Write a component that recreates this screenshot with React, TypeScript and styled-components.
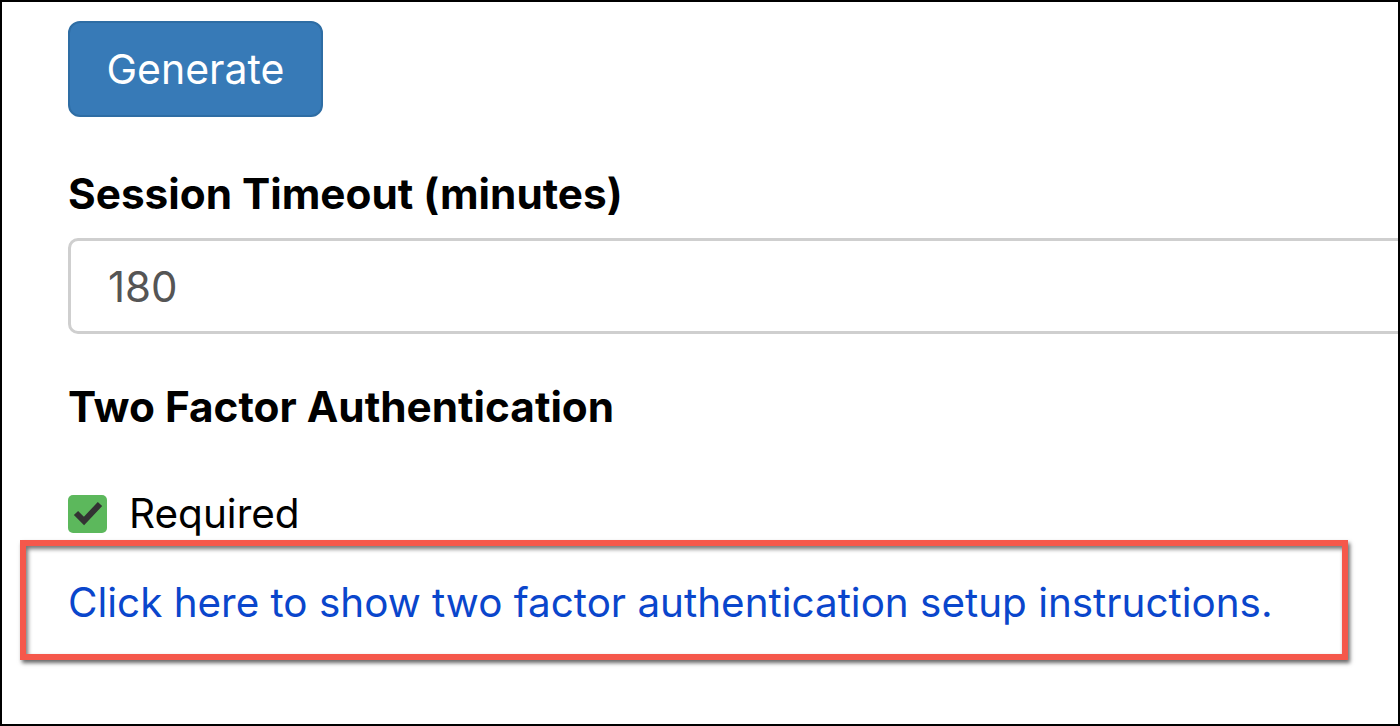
import React from 'react';
import styled, { createGlobalStyle } from 'styled-components';

const GlobalStyle = createGlobalStyle`
  html, body {
    margin: 0;
    padding: 0;
    background: #fff;
  }
  body {
    font-family: Inter, "Liberation Sans", sans-serif;
    color: #000;
  }
`;

const Frame = styled.div`
  box-sizing: border-box;
  width: 1400px;
  height: 726px;
  border: 2px solid #000;
  overflow: hidden;
  padding: 19px 0 0 66px;
  display: flex;
  flex-direction: column;
  align-items: flex-start;
`;

const Button = styled.button`
  box-sizing: border-box;
  width: 255px;
  height: 96px;
  display: flex;
  align-items: center;
  justify-content: center;
  background: #377ab7;
  border: 2px solid #2e6da4;
  border-radius: 12px;
  color: #fff;
  font-family: Inter, "Liberation Sans", sans-serif;
  font-size: 41px;
  padding: 0;
`;

const Label = styled.label<{ $top: number }>`
  display: block;
  margin-top: ${(p) => p.$top}px;
  font-size: 42.3px;
  font-weight: 700;
  line-height: 50px;
`;

const Input = styled.div`
  box-sizing: border-box;
  width: 1360px;
  height: 96px;
  margin-top: 19px;
  border: 3px solid #cfcfcf;
  border-radius: 10px;
  display: flex;
  align-items: center;
  padding-left: 37px;
  font-size: 42px;
  color: #555;
`;

const CheckRow = styled.div`
  display: flex;
  align-items: center;
  gap: 22px;
  margin-top: 63px;
  height: 38px;
`;

const CheckBox = styled.span`
  width: 39px;
  height: 38px;
  border-radius: 5px;
  background: #5cb85c;
  display: flex;
`;

const CheckText = styled.span`
  font-size: 40.5px;
  line-height: 38px;
`;

const Callout = styled.div`
  box-sizing: border-box;
  width: 1328px;
  height: 120px;
  margin: 7px 0 0 -48px;
  border: 6px solid #f5584b;
  box-shadow: 2px 3px 4px rgba(0, 0, 0, 0.6), inset 2px 3px 4px rgba(0, 0, 0, 0.55);
  display: flex;
  align-items: center;
  padding: 5px 0 0 42px;
`;

const Link = styled.a`
  font-size: 40.4px;
  color: #0a46cc;
  text-decoration: none;
`;

export default function App() {
  return (
    <>
      <GlobalStyle />
      <Frame>
        <Button>Generate</Button>
        <Label $top={52}>Session Timeout (minutes)</Label>
        <Input>180</Input>
        <Label $top={48}>Two Factor Authentication</Label>
        <CheckRow>
          <CheckBox>
            <svg width="39" height="38" viewBox="0 0 39 38">
              <polyline points="8,18 16,26 32,9" fill="none" stroke="#333" strokeWidth="6" />
            </svg>
          </CheckBox>
          <CheckText>Required</CheckText>
        </CheckRow>
        <Callout>
          <Link href="#">Click here to show two factor authentication setup instructions.</Link>
        </Callout>
      </Frame>
    </>
  );
}
